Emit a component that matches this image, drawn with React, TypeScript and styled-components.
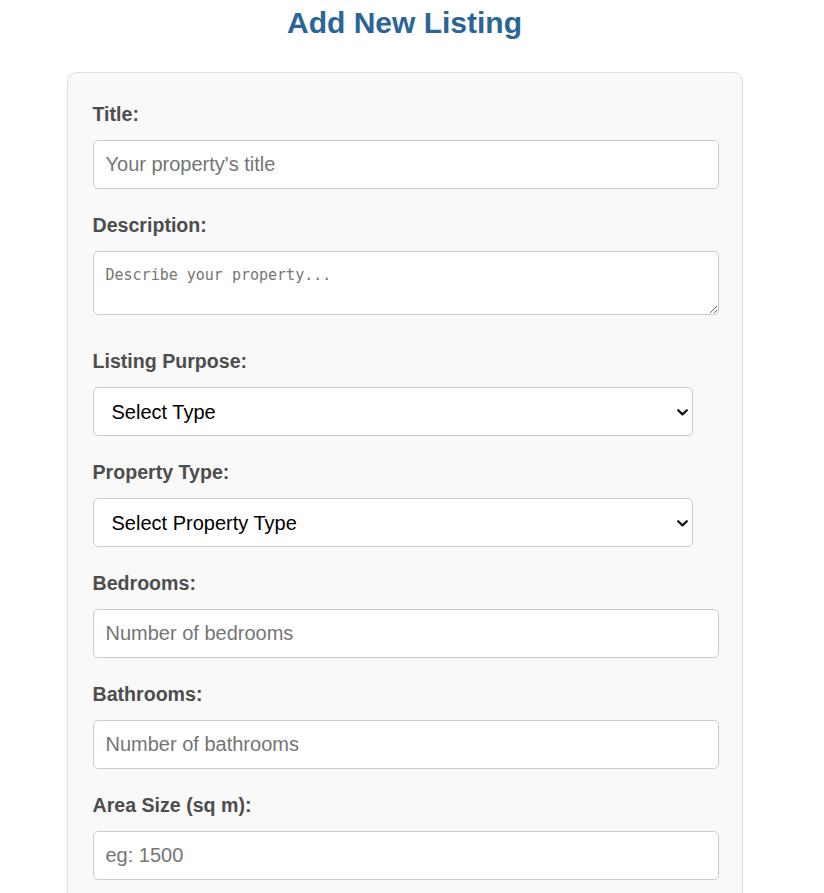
import React from "react";
import styled, { createGlobalStyle } from "styled-components";

const GlobalStyle = createGlobalStyle`
  html {
    scrollbar-width: none;
  }
  html::-webkit-scrollbar,
  body::-webkit-scrollbar {
    display: none;
  }
  body {
    margin: 0;
    background: #ffffff;
    font-family: "Liberation Sans", Arial, sans-serif;
  }
`;

const Page = styled.main`
  width: 809px;
  padding-top: 6px;
  box-sizing: border-box;
`;

const Heading = styled.h2`
  margin: 0 0 32px;
  text-align: center;
  font-family: "Liberation Sans", Arial, sans-serif;
  font-size: 30px;
  font-weight: 700;
  line-height: normal;
  color: #2b6597;
`;

const Card = styled.form`
  width: 676px;
  margin: 0 auto;
  box-sizing: border-box;
  padding: 30px 23px 40px 25px;
  background: #f9f9f9;
  border: 1px solid #dddddd;
  border-radius: 10px;
  display: flex;
  flex-direction: column;
  gap: 25px;
`;

const Group = styled.div`
  display: flex;
  flex-direction: column;
  gap: 15px;
`;

const Label = styled.label`
  display: block;
  font-family: "Liberation Sans", Arial, sans-serif;
  font-size: 19.6px;
  font-weight: 700;
  line-height: 22px;
  color: #4d4d4d;
`;

const fieldBase = `
  box-sizing: border-box;
  border: 1px solid #cccccc;
  border-radius: 5px;
  background: #ffffff;
  margin: 0;
`;

const Input = styled.input`
  ${fieldBase}
  width: 100%;
  height: 49px;
  padding: 12px;
  font-family: "Liberation Sans", Arial, sans-serif;
  font-size: 20px;
  line-height: normal;
  color: #222;

  &::placeholder {
    color: #757575;
  }
`;

const TextArea = styled.textarea`
  ${fieldBase}
  display: block;
  width: 100%;
  height: 64px;
  padding: 12px;
  margin-bottom: 10px;
  font-family: "DejaVu Sans Mono", "Liberation Mono", monospace;
  font-size: 15px;
  line-height: 1.5;
  color: #222;

  &::placeholder {
    color: #757575;
  }
`;

const SelectWrap = styled.div`
  position: relative;
  width: 600px;
`;

const Select = styled.select`
  ${fieldBase}
  appearance: none;
  -webkit-appearance: none;
  display: block;
  width: 100%;
  height: 49px;
  padding: 12px 30px 12px 18px;
  font-family: "Liberation Sans", Arial, sans-serif;
  font-size: 20px;
  color: #000000;
`;

const Chevron = styled.svg`
  position: absolute;
  right: 5px;
  top: 22px;
  width: 11px;
  height: 7px;
  pointer-events: none;
`;

function SelectField(props: { id: string; options: string[] }) {
  return (
    <SelectWrap>
      <Select id={props.id} defaultValue="">
        {props.options.map((o, i) => (
          <option key={o} value={i === 0 ? "" : o}>
            {o}
          </option>
        ))}
      </Select>
      <Chevron viewBox="0 0 11 7" aria-hidden="true">
        <path
          d="M1.2 1.2 L5.5 5.4 L9.8 1.2"
          fill="none"
          stroke="#111"
          strokeWidth="2.2"
          strokeLinecap="round"
          strokeLinejoin="round"
        />
      </Chevron>
    </SelectWrap>
  );
}

export default function App() {
  return (
    <>
      <GlobalStyle />
      <Page>
        <Heading>Add New Listing</Heading>
        <Card onSubmit={(e) => e.preventDefault()}>
          <Group>
            <Label htmlFor="title">Title:</Label>
            <Input id="title" type="text" placeholder="Your property's title" />
          </Group>
          <Group>
            <Label htmlFor="description">Description:</Label>
            <TextArea id="description" placeholder="Describe your property..." />
          </Group>
          <Group>
            <Label htmlFor="purpose">Listing Purpose:</Label>
            <SelectField id="purpose" options={["Select Type", "For Sale", "For Rent"]} />
          </Group>
          <Group>
            <Label htmlFor="ptype">Property Type:</Label>
            <SelectField
              id="ptype"
              options={["Select Property Type", "Apartment", "House", "Villa", "Land"]}
            />
          </Group>
          <Group>
            <Label htmlFor="bedrooms">Bedrooms:</Label>
            <Input id="bedrooms" type="number" placeholder="Number of bedrooms" />
          </Group>
          <Group>
            <Label htmlFor="bathrooms">Bathrooms:</Label>
            <Input id="bathrooms" type="number" placeholder="Number of bathrooms" />
          </Group>
          <Group>
            <Label htmlFor="area">Area Size (sq m):</Label>
            <Input id="area" type="number" placeholder="eg: 1500" />
          </Group>
        </Card>
      </Page>
    </>
  );
}
